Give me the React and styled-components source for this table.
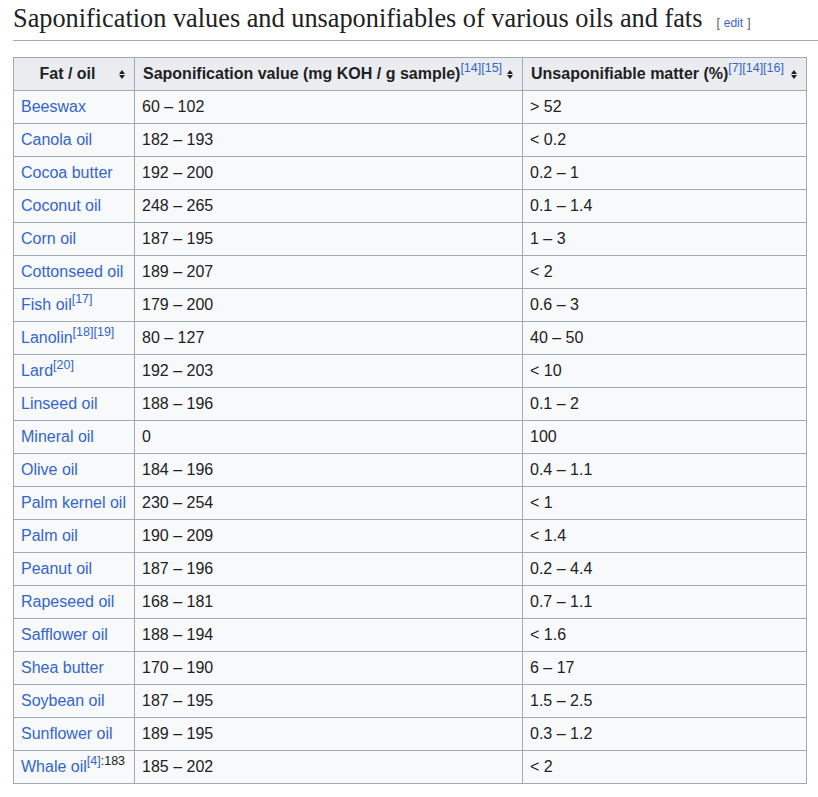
import styled, { createGlobalStyle } from 'styled-components'

const Global = createGlobalStyle`
  body {
    margin: 0;
    background: #fff;
    color: #202122;
    font-family: "Liberation Sans", Arial, sans-serif;
  }
`

const Page = styled.div`
  padding: 2px 0 0 13px;
`

const Heading = styled.h2`
  margin: 0 0 16px;
  padding-bottom: 5px;
  border-bottom: 1px solid #a2a9b1;
  font-family: "Liberation Serif", "Times New Roman", serif;
  font-weight: normal;
  font-size: 26.3px;
  line-height: 33px;
  display: flex;
  align-items: baseline;
  gap: 14px;
`

const Edit = styled.span`
  font-family: "Liberation Sans", Arial, sans-serif;
  font-size: 12px;
  line-height: 1;
  color: #54595d;
  a { color: #3366cc; margin: 0 4px; }
`

const Table = styled.table`
  border-collapse: collapse;
  table-layout: fixed;
  width: 794px;
  background: #f8f9fa;
  border: 1px solid #a2a9b1;
  font-size: 16px;
  line-height: 22px;
`

const Th = styled.th`
  background: #eaecf0;
  border: 1px solid #a2a9b1;
  padding: 5px 21px 5px 8px;
  text-align: ${p => p.$center ? 'center' : 'left'};
  font-weight: bold;
  position: relative;
  white-space: nowrap;
`

const Sort = styled.span`
  position: absolute;
  right: 9px;
  top: 12px;
  display: flex;
  flex-direction: column;
  gap: 1px;
  i {
    display: block;
    width: 0;
    height: 0;
    border-left: 3.5px solid transparent;
    border-right: 3.5px solid transparent;
  }
  i:first-child { border-bottom: 4px solid #202122; }
  i:last-child { border-top: 4px solid #202122; }
`

const Td = styled.td`
  border: 1px solid #a2a9b1;
  padding: 5px 7px;
  white-space: nowrap;
`

const Link = styled.a`
  color: #3366cc;
  text-decoration: none;
`

const Sup = styled.sup`
  font-size: 12.5px;
  font-weight: normal;
  line-height: 0;
  vertical-align: 7px;
  color: #3366cc;
`

const Page183 = styled.span`
  color: #202122;
`

const SortIcon = () => (
  <Sort><i /><i /></Sort>
)

const rows = [
  ['Beeswax', null, '60 – 102', '> 52'],
  ['Canola oil', null, '182 – 193', '< 0.2'],
  ['Cocoa butter', null, '192 – 200', '0.2 – 1'],
  ['Coconut oil', null, '248 – 265', '0.1 – 1.4'],
  ['Corn oil', null, '187 – 195', '1 – 3'],
  ['Cottonseed oil', null, '189 – 207', '< 2'],
  ['Fish oil', '[17]', '179 – 200', '0.6 – 3'],
  ['Lanolin', '[18][19]', '80 – 127', '40 – 50'],
  ['Lard', '[20]', '192 – 203', '< 10'],
  ['Linseed oil', null, '188 – 196', '0.1 – 2'],
  ['Mineral oil', null, '0', '100'],
  ['Olive oil', null, '184 – 196', '0.4 – 1.1'],
  ['Palm kernel oil', null, '230 – 254', '< 1'],
  ['Palm oil', null, '190 – 209', '< 1.4'],
  ['Peanut oil', null, '187 – 196', '0.2 – 4.4'],
  ['Rapeseed oil', null, '168 – 181', '0.7 – 1.1'],
  ['Safflower oil', null, '188 – 194', '< 1.6'],
  ['Shea butter', null, '170 – 190', '6 – 17'],
  ['Soybean oil', null, '187 – 195', '1.5 – 2.5'],
  ['Sunflower oil', null, '189 – 195', '0.3 – 1.2'],
  ['Whale oil', 'whale', '185 – 202', '< 2'],
]

export default function App() {
  return (
    <Page>
      <Global />
      <Heading>
        Saponification values and unsaponifiables of various oils and fats
        <Edit>[<Link as="a">edit</Link>]</Edit>
      </Heading>
      <Table>
        <colgroup>
          <col style={{ width: 121 }} />
          <col style={{ width: 388 }} />
          <col style={{ width: 284 }} />
        </colgroup>
        <thead>
          <tr>
            <Th $center>Fat / oil<SortIcon /></Th>
            <Th>
              Saponification value (mg KOH / g sample)<Sup>[14][15]</Sup><SortIcon />
            </Th>
            <Th>
              Unsaponifiable matter (%)<Sup>[7][14][16]</Sup><SortIcon />
            </Th>
          </tr>
        </thead>
        <tbody>
          {rows.map(([name, ref, sap, uns]) => (
            <tr key={name}>
              <Td>
                <Link>{name}</Link>
                {ref === 'whale' ? (
                  <Sup>[4]<Page183>:183</Page183></Sup>
                ) : ref && <Sup>{ref}</Sup>}
              </Td>
              <Td>{sap}</Td>
              <Td>{uns}</Td>
            </tr>
          ))}
        </tbody>
      </Table>
    </Page>
  )
}
